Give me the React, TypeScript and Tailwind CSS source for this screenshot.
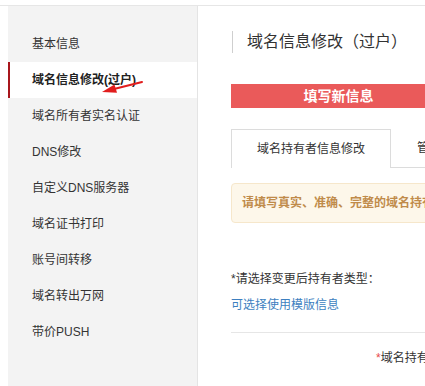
const menu = [
	'基本信息',
	'域名信息修改(过户)',
	'域名所有者实名认证',
	'DNS修改',
	'自定义DNS服务器',
	'域名证书打印',
	'账号间转移',
	'域名转出万网',
	'带价PUSH',
];

const ACTIVE = 1;

function Sidebar() {
	return (
		<aside className="ml-[8px] w-[190px] shrink-0 border-r border-[#e4e4e4] bg-[#f3f3f3] pt-[20px]">
			{menu.map((label, i) =>
				i === ACTIVE ? (
					<div
						key={label}
						className="flex h-[36px] items-center border-l-2 border-[#a8161c] bg-white pl-[22px] text-[12px] font-bold text-[#222]"
					>
						{label}
					</div>
				) : (
					<div key={label} className="flex h-[36px] items-center pl-[24px] text-[12px] text-[#333]">
						{label}
					</div>
				),
			)}
		</aside>
	);
}

function Arrow() {
	return (
		<svg className="absolute left-[95px] top-[75px]" width="50" height="24" viewBox="0 0 50 24">
			<line x1="47" y1="7" x2="18" y2="14.3" stroke="#e11d1d" strokeWidth="2" strokeLinecap="round" />
			<polygon points="7,17 22,17.8 19.5,9.5" fill="#e11d1d" />
		</svg>
	);
}

export default function App() {
	return (
		<div className="relative h-[386px] w-[425px] overflow-hidden bg-white font-['Liberation_Sans','Noto_Sans_CJK_SC',sans-serif] text-[#333]">
			<div className="h-[5px]" />
			<div className="flex h-[381px] border-t border-[#e6e6e6]">
				<Sidebar />
				<main className="min-w-0 flex-1 pl-[33px]">
					<div className="ml-[1px] mt-[25px] h-[22px] border-l border-[#cfcfcf] pl-[14px] text-[16px] leading-[22px] whitespace-nowrap text-[#333]">
						域名信息修改（过户）
					</div>

					<div className="mt-[31px] flex h-[24px] w-[215px] items-center justify-center bg-[#ea5a5a] text-[14px] font-bold text-white">
						填写新信息
					</div>

					<div className="mt-[21px] flex h-[39px]">
						<div className="flex w-[160px] shrink-0 items-center justify-center border border-b-0 border-[#dcdcdc] bg-white text-[12px] text-[#333]">
							域名持有者信息修改
						</div>
						<div className="flex flex-1 items-center overflow-hidden whitespace-nowrap border-b border-[#dcdcdc] pl-[26px] text-[12px] text-[#333]">
							管理联系人信息修改
						</div>
					</div>

					<div className="mt-[15px] flex h-[40px] w-[300px] items-center whitespace-nowrap rounded-[4px] border border-[#f6e7cb] bg-[#fdf7ea] pl-[10px] text-[12px] font-bold text-[#c08b4a]">
						请填写真实、准确、完整的域名持有者信息
					</div>

					<div className="mt-[47px] text-[12px] leading-[18px] whitespace-nowrap text-[#333]">*请选择变更后持有者类型：</div>
					<div className="mt-[8px] text-[12px] leading-[18px] whitespace-nowrap text-[#3d7fc0]">可选择使用模版信息</div>

					<div className="mt-[18px] border-t border-[#e6e6e6]" />

					<div className="mt-[16px] pl-[145px] text-[12px] leading-[18px] whitespace-nowrap text-[#333]">
						<span className="text-[#e84a4a]">*</span>域名持有者类型
					</div>
				</main>
			</div>
			<Arrow />
		</div>
	);
}
